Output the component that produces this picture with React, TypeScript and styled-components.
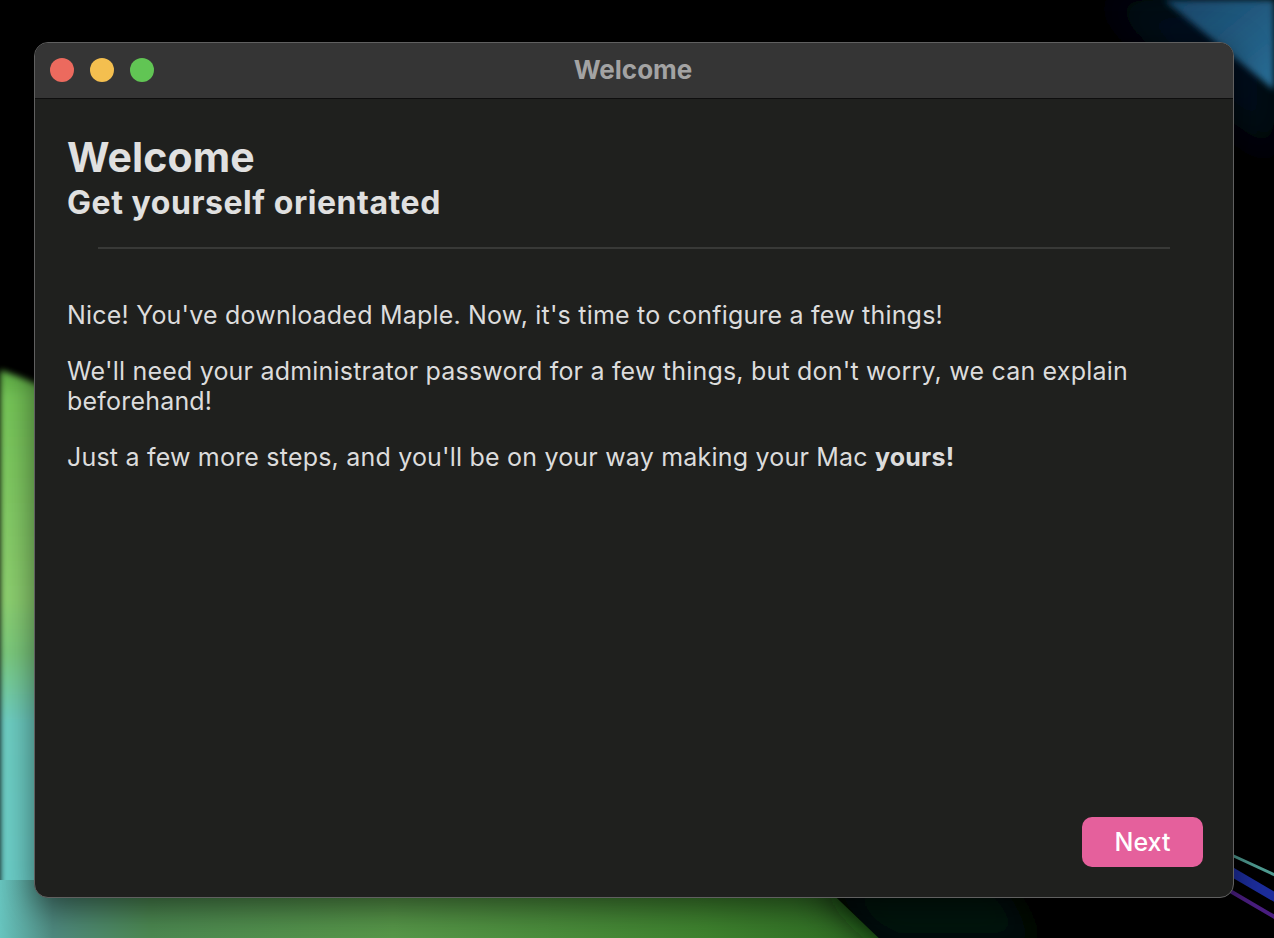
import React from 'react'
import styled, { createGlobalStyle } from 'styled-components'

const GlobalStyle = createGlobalStyle`
    html, body {
        margin: 0;
        padding: 0;
        background: #000;
    }
    * {
        box-sizing: border-box;
    }
`

const Desktop = styled.main`
    position: relative;
    width: 1274px;
    height: 938px;
    overflow: hidden;
    display: flex;
    padding: 42px 40px 40px 34px;
    font-family: Inter, "Liberation Sans", sans-serif;
`

const Wallpaper = styled.svg`
    position: absolute;
    inset: 0;
    width: 100%;
    height: 100%;
`

const Window = styled.section`
    position: relative;
    flex: 1;
    display: flex;
    flex-direction: column;
    border: 1px solid #606060;
    border-radius: 14px;
    overflow: hidden;
    background-color: #1f201e;
    box-shadow: 0 10px 34px rgba(0, 0, 0, 0.55);
`

const TitleBar = styled.header`
    position: relative;
    height: 56px;
    flex-shrink: 0;
    display: flex;
    align-items: center;
    justify-content: center;
    background-color: #353535;
    border-bottom: 1px solid #0e0e0e;
`

const Lights = styled.div`
    position: absolute;
    left: 15px;
    top: 15px;
    display: flex;
    gap: 16px;
`

const Light = styled.span<{ color: string }>`
    width: 24px;
    height: 24px;
    border-radius: 50%;
    background-color: ${(p) => p.color};
`

const WindowTitle = styled.h1`
    margin: -2px 0 0 -2px;
    font-size: 26px;
    font-weight: 700;
    color: #a3a3a3;
`

const Content = styled.div`
    flex: 1;
    display: flex;
    flex-direction: column;
    padding: 34px 30px 30px 32px;
    color: #dedede;
`

const Heading = styled.h2`
    margin: 0;
    font-size: 41px;
    line-height: 48px;
    font-weight: 700;
    color: #e0e0e0;
    letter-spacing: 0.1px;
`

const SubHeading = styled.h3`
    margin: 4px 0 0 0;
    font-size: 32px;
    line-height: 36px;
    font-weight: 700;
    color: #e0e0e0;
    letter-spacing: 0.55px;
`

const Divider = styled.hr`
    margin: 26px 33px 0 31px;
    border: none;
    height: 2px;
    background-color: #383937;
`

const Body = styled.div`
    margin-top: 51px;
    display: flex;
    flex-direction: column;
    gap: 26px;
`

const Paragraph = styled.p`
    margin: 0;
    font-size: 25px;
    line-height: 30px;
    letter-spacing: 0.2px;
    color: #dcdcdc;
`

const Footer = styled.footer`
    margin-top: auto;
    display: flex;
    justify-content: flex-end;
`

const NextButton = styled.button`
    width: 121px;
    height: 50px;
    border: none;
    border-radius: 10px;
    background-color: #e5609c;
    color: #ffffff;
    font-family: Inter, "Liberation Sans", sans-serif;
    font-size: 25px;
    font-weight: 500;
    cursor: pointer;
`

const Background = (): JSX.Element => (
    <Wallpaper viewBox='0 0 1274 938' preserveAspectRatio='none'>
        <defs>
            <filter id='soft' x='-20%' y='-20%' width='140%' height='140%'>
                <feGaussianBlur stdDeviation='3' />
            </filter>
            <filter id='glow' x='-50%' y='-50%' width='200%' height='200%'>
                <feGaussianBlur stdDeviation='18' />
            </filter>
            <linearGradient id='blue' x1='0' y1='0' x2='1' y2='1'>
                <stop offset='0' stopColor='#174466' />
                <stop offset='1' stopColor='#2a6f98' />
            </linearGradient>
            <linearGradient id='leftGreen' x1='0' y1='0' x2='0' y2='1'>
                <stop offset='0' stopColor='#5aa842' />
                <stop offset='0.05' stopColor='#76c658' />
                <stop offset='0.4' stopColor='#8ed170' />
                <stop offset='0.5' stopColor='#7ccb7e' />
                <stop offset='0.62' stopColor='#6ecfc4' />
                <stop offset='1' stopColor='#6ccfcb' />
            </linearGradient>
            <linearGradient id='bottom' x1='0' y1='0' x2='1' y2='0'>
                <stop offset='0' stopColor='#6ccfca' />
                <stop offset='0.07' stopColor='#4f8a80' />
                <stop offset='0.18' stopColor='#4d8a52' />
                <stop offset='0.45' stopColor='#58994a' />
                <stop offset='0.8' stopColor='#3f842f' />
                <stop offset='1' stopColor='#2d6a22' />
            </linearGradient>
        </defs>
        <rect width='1274' height='938' fill='#000' />
        <polygon points='1100,0 1274,0 1274,160' fill='#06101c' filter='url(#glow)' />
        <polygon points='1164,0 1274,0 1274,90' fill='url(#blue)' filter='url(#soft)' />
        <path d='M0,370 C20,376 45,388 80,402 L80,938 L0,938 Z' fill='url(#leftGreen)' filter='url(#soft)' />
        <polygon points='-10,880 818,880 886,945 -10,945' fill='url(#bottom)' />
        <polygon points='818,880 1000,880 1040,945 886,945' fill='#06140a' filter='url(#glow)' />
        <line x1='1225' y1='852' x2='1290' y2='882' stroke='#4f9c92' strokeWidth='3' />
        <line x1='1225' y1='868' x2='1290' y2='906' stroke='#1c2d9c' strokeWidth='9' />
        <line x1='1225' y1='888' x2='1290' y2='926' stroke='#4a1e80' strokeWidth='4' />
    </Wallpaper>
)

const App = (): JSX.Element => {
    const handleNext = (): void => {
        console.log('next')
    }

    return (
        <Desktop>
            <GlobalStyle />
            <Background />
            <Window>
                <TitleBar>
                    <Lights>
                        <Light color='#ec6a5e' />
                        <Light color='#f4bf4f' />
                        <Light color='#61c554' />
                    </Lights>
                    <WindowTitle>Welcome</WindowTitle>
                </TitleBar>
                <Content>
                    <Heading>Welcome</Heading>
                    <SubHeading>Get yourself orientated</SubHeading>
                    <Divider />
                    <Body>
                        <Paragraph>
                            Nice! You've downloaded Maple. Now, it's time to configure a few things!
                        </Paragraph>
                        <Paragraph>
                            We'll need your administrator password for a few things, but don't worry, we can explain beforehand!
                        </Paragraph>
                        <Paragraph>
                            Just a few more steps, and you'll be on your way making your Mac <b>yours!</b>
                        </Paragraph>
                    </Body>
                    <Footer>
                        <NextButton type='button' onClick={handleNext}>Next</NextButton>
                    </Footer>
                </Content>
            </Window>
        </Desktop>
    )
}

export default App
